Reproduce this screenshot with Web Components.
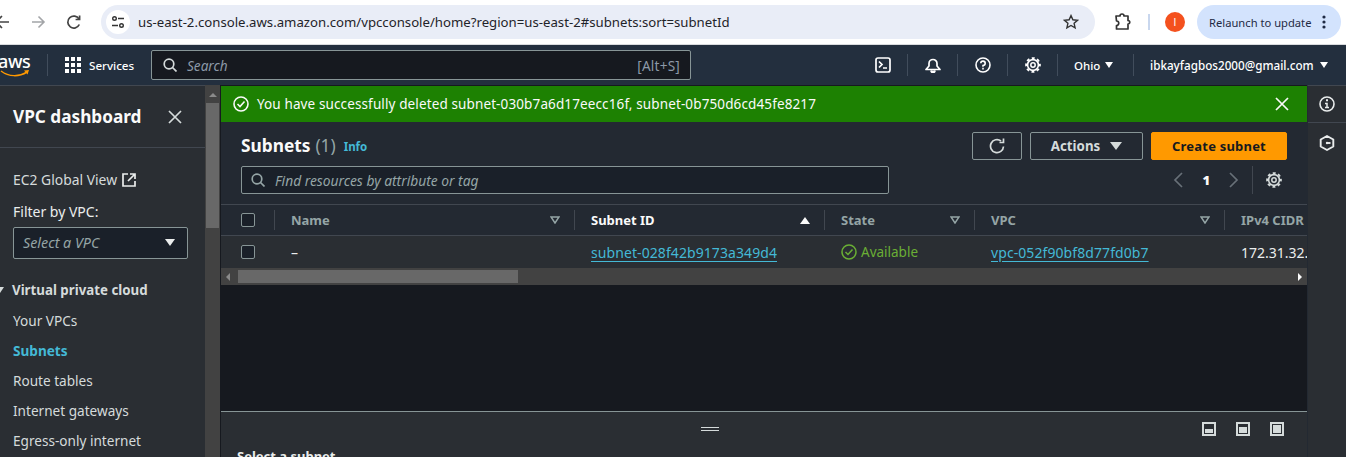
<!DOCTYPE html>
<html>
<head>
<meta charset="utf-8">
<style>
  html, body { margin: 0; padding: 0; height: 457px; overflow: hidden; background: #16191f; }
  body { font-family: "Noto Sans", "Open Sans", sans-serif; display: flex; flex-direction: column; }
  .work { display: flex; height: 372px; overflow: hidden; }
</style>
</head>
<body>
<chrome-bar></chrome-bar>
<aws-nav></aws-nav>
<div class="work">
  <vpc-side></vpc-side>
  <page-scroll></page-scroll>
  <subnet-main></subnet-main>
  <tools-rail></tools-rail>
</div>

<script>
// same gear is used in the top nav and next to the pager
const gear = (color, cls) => `<svg class="${cls || ""}" width="16" height="16" viewBox="0 0 16 16" fill="none" stroke="${color}"><circle cx="8" cy="8" r="5.400" stroke-width="1.600"/><circle cx="8" cy="8" r="6.900" stroke-width="1.900" stroke-dasharray="2.900 2.520" stroke-dashoffset="1.450"/><circle cx="8" cy="8" r="2.200" stroke-width="1.500"/></svg>`;

class chromeBar extends HTMLElement {
  constructor(){
    super();
    this.attachShadow({mode:"open"});
    this.shadowRoot.innerHTML = `
    <style>
      :host { display: flex; align-items: center; height: 44px; background: #fff; border-bottom: 1px solid #d9dbde; box-sizing: content-box; flex: none; font-family: "Noto Sans", sans-serif; }
      svg { display: block; flex: none; }
      .nav { display: flex; align-items: center; margin-left: -6px; width: 107px; gap: 20px; }
      .url { display: flex; align-items: center; width: 994px; height: 34px; background: #e9edf7; border-radius: 17px; box-sizing: border-box; padding: 0 16px 0 5px; color: #1f2329; font-size: 13.200px; }
      .tune { width: 24px; height: 24px; background: #fff; border-radius: 50%; display: flex; align-items: center; justify-content: center; margin-right: 8px; }
      .addr { flex: 1; white-space: nowrap; }
      .ext { margin-left: 18px; }
      .sep { width: 2px; height: 16px; background: #c9d7ee; margin: 0 15px 0 17px; }
      .avatar { width: 20px; height: 20px; border-radius: 50%; background: #f4511e; color: #fff; font: 10px "Liberation Sans", sans-serif; display: flex; align-items: center; justify-content: center; }
      .relaunch { display: flex; align-items: center; margin-left: 12px; width: 144px; height: 34px; box-sizing: border-box; background: #d3e3fd; border-radius: 17px; padding-left: 12px; color: #1f2a44; font-size: 11.200px; white-space: nowrap; }
      .dots { margin-left: 11px; }
    </style>
    <div class="nav">
      <svg width="16" height="16" viewBox="0 0 16 16" fill="none" stroke="#444" stroke-width="1.600"><path d="M15 8H2M8 2 2 8l6 6"/></svg>
      <svg width="16" height="16" viewBox="0 0 16 16" fill="none" stroke="#a3a5a8" stroke-width="1.600"><path d="M2 8h12M8.500 2.500 14 8l-5.500 5.500"/></svg>
      <svg width="16" height="16" viewBox="0 0 16 16" fill="none" stroke="#444" stroke-width="1.700"><path d="M13.300 10.500A6 6 0 1 1 13 5"/><path d="M13.600 1.500v4h-4" /></svg>
    </div>
    <div class="url">
      <span class="tune"><svg width="14" height="14" viewBox="0 0 14 14" fill="none" stroke="#333" stroke-width="1.400"><circle cx="3.500" cy="3.500" r="1.800"/><path d="M7 3.500h6M1 10.500h6"/><circle cx="10.500" cy="10.500" r="1.800"/></svg></span>
      <span class="addr">us-east-2.console.aws.amazon.com/vpcconsole/home?region=us-east-2#subnets:sort=subnetId</span>
      <svg width="16" height="16" viewBox="0 0 16 16" fill="none" stroke="#333" stroke-width="1.400"><path d="m8 1.600 1.900 4.200 4.600.5-3.400 3 1 4.500L8 11.500 3.900 13.800l1-4.500-3.400-3 4.600-.5z"/></svg>
    </div>
    <svg class="ext" width="18" height="18" viewBox="0 0 18 18" fill="none" stroke="#333" stroke-width="1.700"><path d="M3 3h4a2 2 0 0 1 4 0h4v4.500a1.600 1.600 0 0 1 0 3.500v5H3.500v-3.500a2 2 0 0 0 0-4.500z" stroke-linejoin="round"/></svg>
    <span class="sep"></span>
    <span class="avatar">I</span>
    <div class="relaunch">Relaunch to update<svg class="dots" width="4" height="14" viewBox="0 0 4 14" fill="#1f2a44"><circle cx="2" cy="2" r="1.600"/><circle cx="2" cy="7" r="1.600"/><circle cx="2" cy="12" r="1.600"/></svg></div>
    `;
  }
}

class awsNav extends HTMLElement {
  constructor(){
    super();
    this.attachShadow({mode:"open"});
    this.shadowRoot.innerHTML = `
    <style>
      :host { display: flex; align-items: center; height: 40px; background: #232f3e; color: #fff; flex: none; font-family: "Noto Sans", sans-serif; font-size: 12px; }
      svg { display: block; flex: none; }
      .logo { position: relative; width: 49px; margin-left: -2px; height: 30px; flex: none; }
      .logo b { font-weight: 500; font-size: 18px; letter-spacing: -.4px; line-height: 22px; display: block; }
      .logo svg { position: absolute; left: 2px; top: 20px; }
      .bar { width: 1px; height: 22px; background: #414d5c; flex: none; }
      .services { display: flex; align-items: center; gap: 8px; margin-left: 17px; width: 86px; font-weight: 500; font-size: 11.600px; }
      .search { display: flex; align-items: center; width: 540px; height: 30px; box-sizing: border-box; margin-right: 167px; background: #16191f; border: 1px solid #879596; border-radius: 2px; padding: 0 10px 0 11px; font-size: 13.600px; }
      .search i { flex: 1; color: #8d99a8; margin-left: 10px; }
      .search span { color: #8d99a8; letter-spacing: .2px; }
      .ico { width: 49px; display: flex; justify-content: center; flex: none; }
      .ohio { display: flex; align-items: center; gap: 5px; padding-left: 16px; box-sizing: border-box; flex: none; font-weight: 500; width: 75px; font-size: 11.500px; }
      .user { display: flex; align-items: center; gap: 6px; flex: none; margin-left: 16px; white-space: nowrap; font-weight: 500; font-size: 11.700px; }
      .tri { width: 0; height: 0; border-left: 4.500px solid transparent; border-right: 4.500px solid transparent; border-top: 6px solid #fff; }
    </style>
    <div class="logo"><b>aws</b><svg width="30" height="8" viewBox="0 0 30 8" fill="none"><path d="M1 1c8 6 18 6 26 1" stroke="#f90" stroke-width="1.500"/><path d="m24 .5 5-.5-1.500 4.500" fill="#f90"/></svg></div>
    <span class="bar"></span>
    <div class="services">
      <svg width="16" height="16" viewBox="0 0 16 16" fill="#fff"><path d="M0 0h4v4H0zM6 0h4v4H6zM12 0h4v4h-4zM0 6h4v4H0zM6 6h4v4H6zM12 6h4v4h-4zM0 12h4v4H0zM6 12h4v4H6zM12 12h4v4h-4z"/></svg>
      <span>Services</span>
    </div>
    <div class="search">
      <svg width="14" height="14" viewBox="0 0 14 14" fill="none" stroke="#d5dbdb" stroke-width="1.700"><circle cx="6" cy="6" r="4.800"/><path d="m9.500 9.500 4 4"/></svg>
      <i>Search</i><span>[Alt+S]</span>
    </div>
    <span class="ico"><svg width="16" height="16" viewBox="0 0 16 16" fill="none" stroke="#fff" stroke-width="1.700"><rect x="1" y="1" width="14" height="14" rx="2"/><path d="m4 4.500 3 3-3 3M8 11h4"/></svg></span>
    <span class="bar"></span>
    <span class="ico"><svg width="16" height="16" viewBox="0 0 16 16" fill="none" stroke="#fff" stroke-width="1.700"><path d="M1 12.500h14l-3-3.500V6.500a4 4 0 0 0-8 0V9z" stroke-linejoin="round"/><path d="M6 13.500a2 2 0 0 0 4 0" fill="#fff"/></svg></span>
    <span class="bar"></span>
    <span class="ico"><svg width="16" height="16" viewBox="0 0 16 16" fill="none" stroke="#fff" stroke-width="1.600"><circle cx="8" cy="8" r="7"/><path d="M5.800 6.200A2.200 2.200 0 1 1 8 8.500v1.300"/><path d="M8 10.800v1.600"/></svg></span>
    <span class="bar"></span>
    <span class="ico">${gear("#fff")}</span>
    <span class="bar"></span>
    <div class="ohio">Ohio<span class="tri"></span></div>
    <span class="bar"></span>
    <div class="user">ibkayfagbos2000@gmail.com<span class="tri"></span></div>
    `;
  }
}

class vpcSide extends HTMLElement {
  constructor(){
    super();
    this.attachShadow({mode:"open"});
    this.shadowRoot.innerHTML = `
    <style>
      :host { display: block; width: 205px; flex: none; background: #2a2e33; color: #d5dbdb; border-top: 1px solid #414750; box-sizing: border-box; font-family: "Noto Sans", sans-serif; font-size: 13.600px; overflow: hidden; }
      svg { display: block; flex: none; }
      .head { display: flex; align-items: center; justify-content: space-between; height: 62px; box-sizing: border-box; padding: 0 23px 0 13px; border-bottom: 1px solid #414750; color: #fafafa; font-size: 17.200px; font-weight: 700; white-space: nowrap; }
      .global { display: flex; align-items: center; gap: 5px; margin: 22px 0 0 13px; line-height: 20px; font-size: 13.900px; }
      .label { margin: 12px 0 5px 13px; line-height: 20px; color: #eaeded; font-size: 14px; }
      .select { display: flex; align-items: center; justify-content: space-between; margin-left: 13px; width: 175px; height: 32px; box-sizing: border-box; padding: 0 12px 1px 9px; background: #1a2029; border: 1px solid #879596; border-radius: 2px; color: #95a5a6; font-style: italic; font-size: 14.300px; }
      .tri { width: 0; height: 0; border-left: 5px solid transparent; border-right: 5px solid transparent; border-top: 7px solid #eaeded; }
      .group { display: flex; align-items: center; gap: 8px; margin: 21px 0 0 -4px; line-height: 20px; font-weight: 700; color: #d5dbdb; font-size: 13.300px; }
      .group .tri { border-left-width: 4px; border-right-width: 4px; border-top-width: 6px; border-top-color: #d5dbdb; }
      ul { list-style: none; margin: 6px 0 0 13px; padding: 0; }
      li { height: 30px; line-height: 30px; white-space: nowrap; }
      li.on { color: #44b9d6; font-weight: 700; }
    </style>
    <div class="head"><span>VPC dashboard</span>
      <svg width="14" height="14" viewBox="0 0 14 14" stroke="#d5dbdb" stroke-width="1.700"><path d="m1 1 12 12M13 1 1 13"/></svg></div>
    <div class="global">EC2 Global View
      <svg width="14" height="14" viewBox="0 0 14 14" fill="none" stroke="#eaeded" stroke-width="1.700"><path d="M6 1H1v12h12V8M8 1h5v5M13 1 6 8"/></svg></div>
    <div class="label">Filter by VPC:</div>
    <div class="select"><span>Select a VPC</span><span class="tri"></span></div>
    <div class="group"><span class="tri"></span><span>Virtual private cloud</span></div>
    <ul>
      <li>Your VPCs</li>
      <li class="on">Subnets</li>
      <li>Route tables</li>
      <li>Internet gateways</li>
      <li>Egress-only internet</li>
    </ul>
    `;
  }
}

class pageScroll extends HTMLElement {
  constructor(){
    super();
    this.attachShadow({mode:"open"});
    this.shadowRoot.innerHTML = `
    <style>
      :host { display: flex; flex-direction: column; align-items: center; width: 15px; flex: none; background: #424242; border-right: 1px solid #16191f; box-sizing: content-box; }
      .up { width: 0; height: 0; margin-top: 8px; border-left: 4px solid transparent; border-right: 4px solid transparent; border-bottom: 4px solid #8a8a8a; }
      .thumb { width: 13px; height: 125px; margin-top: 6px; background: #686868; }
    </style>
    <span class="up"></span><span class="thumb"></span>
    `;
  }
}

class subnetMain extends HTMLElement {
  constructor(){
    super();
    this.attachShadow({mode:"open"});
    this.shadowRoot.innerHTML = `
    <style>
      :host { display: flex; flex-direction: column; width: 1086px; flex: none; background: #16191f; color: #eaeded; font-family: "Noto Sans", sans-serif; font-size: 13px; overflow: hidden; }
      svg { display: block; flex: none; }
      .flash { display: flex; align-items: center; height: 36px; margin-top: 1px; flex: none; box-sizing: border-box; padding: 0 18px 0 12px; background: #1d8102; color: #fafafa; font-size: 13.500px; letter-spacing: .12px; white-space: nowrap; }
      .flash span { flex: 1; margin-left: 8px; }
      .tools { height: 82px; flex: none; box-sizing: border-box; background: #232932; padding: 10px 20px 0; display: grid; grid-template-columns: 648px 1fr; grid-template-rows: 28px 28px; row-gap: 6px; }
      .title { display: flex; align-items: center; gap: 5px; font-size: 17.300px; font-weight: 700; color: #fafafa; white-space: nowrap; margin-top: -2px; }
      .title em { font-style: normal; font-weight: 400; color: #95a5a6; }
      .title a { color: #44b9d6; font-size: 11.500px; margin-left: 3px; margin-top: 2px; }
      .btns { display: flex; justify-content: flex-end; gap: 8px; }
      .btn { display: flex; align-items: center; justify-content: center; gap: 10px; box-sizing: border-box; border: 1px solid #879596; border-radius: 2px; font-weight: 700; color: #d5dbdb; }
      .refresh { width: 50px; }
      .actions { width: 113px; font-size: 13.300px; }
      .create { width: 136px; background: #f90; border-color: #f90; color: #16191f; letter-spacing: .2px; }
      .tri { width: 0; height: 0; border-left: 6px solid transparent; border-right: 6px solid transparent; border-top: 8px solid #d5dbdb; }
      .find { display: flex; align-items: center; gap: 10px; box-sizing: border-box; height: 28px; padding-left: 9px; background: #1a2029; border: 1px solid #879596; border-radius: 2px; color: #95a5a6; font-style: italic; font-size: 13.800px; }
      .pager { display: flex; align-items: center; justify-content: flex-end; font-weight: 700; }
      .pager b { margin: 0 19px; color: #fafafa; }
      .pager .vr { width: 1px; height: 28px; background: #414750; margin: 0 13px; }
      .pager .gear { margin-right: 5px; }
      .row { display: grid; grid-template-columns: 54px 300px 250px 150px 250px 82px; flex: none; box-sizing: border-box; }
      .row > div { display: flex; align-items: center; justify-content: space-between; box-sizing: border-box; padding-left: 16px; white-space: nowrap; overflow: hidden; position: relative; }
      .row > div.chk { padding-left: 20px; }
      .thead { height: 32px; background: #232932; border-top: 1px solid #414750; border-bottom: 1px solid #414750; color: #95a5a6; font-weight: 700; }
      .thead > div { padding-right: 15px; }
      .thead > div:not(:last-child)::after { content: ""; position: absolute; right: 0; top: 5px; bottom: 5px; width: 1px; background: #414750; }
      .thead > div.sorted { color: #fafafa; }
      .tbody { height: 32px; background: #2a2e33; color: #eaeded; font-size: 14px; }
      .box { width: 14px; height: 14px; box-sizing: border-box; background: #1a2029; border: 1px solid #879596; border-radius: 2px; }
      .up { width: 0; height: 0; border-left: 5px solid transparent; border-right: 5px solid transparent; border-bottom: 7px solid #fafafa; }
      a.link { color: #44b9d6; text-decoration: underline; text-underline-offset: 3px; letter-spacing: .08px; }
      .ok { color: #6aaf35; gap: 4px; justify-content: flex-start !important; font-size: 13.500px; }
      .hscroll { display: flex; align-items: center; height: 17px; flex: none; background: #424242; box-sizing: border-box; padding: 0 5px; }
      .hscroll .thumb { width: 280px; height: 13px; background: #686868; margin-left: 8px; }
      .hscroll .l { width: 0; height: 0; border-top: 4px solid transparent; border-bottom: 4px solid transparent; border-right: 4px solid #8a8a8a; }
      .hscroll .r { width: 0; height: 0; margin-left: auto; border-top: 4px solid transparent; border-bottom: 4px solid transparent; border-left: 4px solid #fafafa; }
      .space { flex: none; height: 126px; background: #16191f; border-bottom: 1px solid #879596; }
      .split { flex: 1; background: #2a2e33; position: relative; min-height: 45px; }
      .grip { position: absolute; left: 480px; top: 15px; width: 18px; height: 4px; border-top: 1px solid #d5dbdb; border-bottom: 1px solid #d5dbdb; box-sizing: border-box; }
      .modes { position: absolute; right: 23px; top: 10px; display: flex; gap: 20px; }
      .modes svg { fill: none; }
      .split h3 { position: absolute; left: 16px; top: 34px; margin: 0; font-size: 13px; font-weight: 700; color: #eaeded; line-height: 20px; }
    </style>
    <div class="flash">
      <svg width="16" height="16" viewBox="0 0 16 16" fill="none" stroke="#fafafa" stroke-width="1.600"><circle cx="8" cy="8" r="7"/><path d="m4.500 8 2.500 2.500 4.500-5"/></svg>
      <span>You have successfully deleted subnet-030b7a6d17eecc16f, subnet-0b750d6cd45fe8217</span>
      <svg width="14" height="14" viewBox="0 0 14 14" stroke="#fafafa" stroke-width="1.700"><path d="m1 1 12 12M13 1 1 13"/></svg>
    </div>
    <div class="tools">
      <div class="title">Subnets <em>(1)</em> <a>Info</a></div>
      <div class="btns">
        <div class="btn refresh"><svg width="16" height="16" viewBox="0 0 16 16" fill="none" stroke="#d5dbdb" stroke-width="1.700"><path d="M14.500 8.500A6.500 6.500 0 1 1 12 3"/><path d="M14.500 .500v4h-4"/></svg></div>
        <div class="btn actions">Actions<span class="tri"></span></div>
        <div class="btn create">Create subnet</div>
      </div>
      <div class="find">
        <svg width="14" height="14" viewBox="0 0 14 14" fill="none" stroke="#95a5a6" stroke-width="1.700"><circle cx="6" cy="6" r="4.800"/><path d="m9.500 9.500 4 4"/></svg>
        <span>Find resources by attribute or tag</span>
      </div>
      <div class="pager">
        <svg width="10" height="16" viewBox="0 0 10 16" fill="none" stroke="#687078" stroke-width="1.700"><path d="M9 1 2 8l7 7"/></svg>
        <b>1</b>
        <svg width="10" height="16" viewBox="0 0 10 16" fill="none" stroke="#687078" stroke-width="1.700"><path d="m1 1 7 7-7 7"/></svg>
        <span class="vr"></span>
        ${gear("#d5dbdb", "gear")}
      </div>
    </div>
    <div class="row thead">
      <div class="chk"><span class="box"></span></div>
      <div><span>Name</span><svg width="10" height="8" viewBox="0 0 10 8" fill="none" stroke="#95a5a6" stroke-width="1.500"><path d="M1 1h8L5 7z"/></svg></div>
      <div class="sorted"><span>Subnet ID</span><span class="up"></span></div>
      <div><span>State</span><svg width="10" height="8" viewBox="0 0 10 8" fill="none" stroke="#95a5a6" stroke-width="1.500"><path d="M1 1h8L5 7z"/></svg></div>
      <div><span>VPC</span><svg width="10" height="8" viewBox="0 0 10 8" fill="none" stroke="#95a5a6" stroke-width="1.500"><path d="M1 1h8L5 7z"/></svg></div>
      <div><span>IPv4 CIDR</span></div>
    </div>
    <div class="row tbody">
      <div class="chk"><span class="box"></span></div>
      <div>–</div>
      <div><a class="link">subnet-028f42b9173a349d4</a></div>
      <div class="ok"><svg width="16" height="16" viewBox="0 0 16 16" fill="none" stroke="#6aaf35" stroke-width="1.500"><circle cx="8" cy="8" r="7"/><path d="m4.500 8 2.500 2.500 4.500-5"/></svg><span>Available</span></div>
      <div><a class="link">vpc-052f90bf8d77fd0b7</a></div>
      <div>172.31.32.0/20</div>
    </div>
    <div class="hscroll"><span class="l"></span><span class="thumb"></span><span class="r"></span></div>
    <div class="space"></div>
    <div class="split">
      <span class="grip"></span>
      <div class="modes">
        <svg width="14" height="14" viewBox="0 0 14 14"><rect x="1" y="1" width="12" height="12" stroke="#d5dbdb" stroke-width="2"/><rect x="3" y="7" width="8" height="4" fill="#d5dbdb"/></svg>
        <svg width="14" height="14" viewBox="0 0 14 14"><rect x="1" y="1" width="12" height="12" stroke="#d5dbdb" stroke-width="2"/><rect x="3" y="5" width="8" height="6" fill="#d5dbdb"/></svg>
        <svg width="14" height="14" viewBox="0 0 14 14"><rect x="1" y="1" width="12" height="12" stroke="#d5dbdb" stroke-width="2"/><rect x="3" y="3" width="8" height="8" fill="#d5dbdb"/></svg>
      </div>
      <h3>Select a subnet</h3>
    </div>
    `;
  }
}

class toolsRail extends HTMLElement {
  constructor(){
    super();
    this.attachShadow({mode:"open"});
    this.shadowRoot.innerHTML = `
    <style>
      :host { display: block; flex: 1; background: #2a2e33; border-left: 1px solid #232932; border-top: 1px solid #414750; box-sizing: border-box; }
      svg { display: block; }
      .a { height: 37px; display: flex; align-items: center; justify-content: center; border-bottom: 1px solid #414750; box-sizing: border-box; }
      .b { height: 39px; display: flex; align-items: center; justify-content: center; }
    </style>
    <div class="a"><svg width="16" height="16" viewBox="0 0 16 16" fill="none" stroke="#eaeded" stroke-width="1.600"><circle cx="8" cy="8" r="7"/><path d="M6 7.500h2v4M6 11.500h4" stroke-width="1.500"/><path d="M7 4.300h2" stroke-width="2"/></svg></div>
    <div class="b"><svg width="16" height="16" viewBox="0 0 16 16" fill="none" stroke="#eaeded" stroke-width="1.900"><path d="M8 1 14.300 4.500v7L8 15l-6.300-3.500v-7z" stroke-linejoin="round"/><path d="M8 8h3.500" /><circle cx="8" cy="8" r="1.200" fill="#eaeded" stroke="none"/></svg></div>
    `;
  }
}

customElements.define("chrome-bar", chromeBar);
customElements.define("aws-nav", awsNav);
customElements.define("vpc-side", vpcSide);
customElements.define("page-scroll", pageScroll);
customElements.define("subnet-main", subnetMain);
customElements.define("tools-rail", toolsRail);
</script>
</body>
</html>
